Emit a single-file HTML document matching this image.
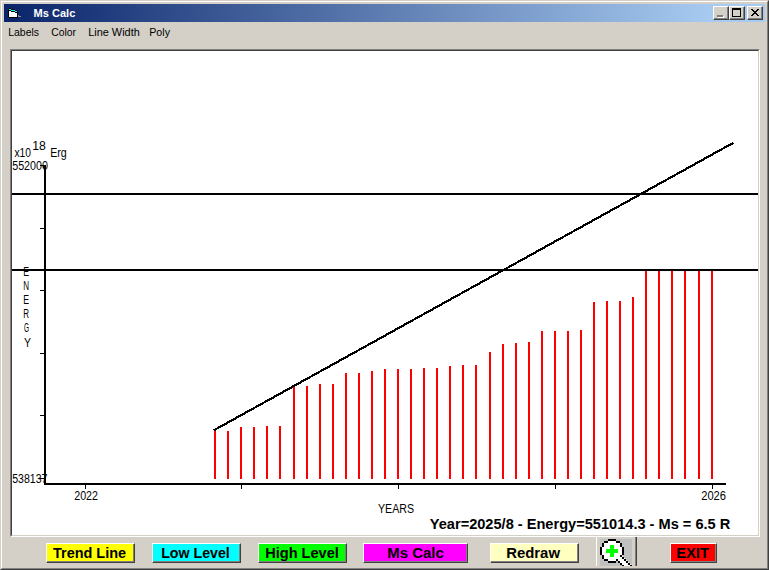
<!DOCTYPE html>
<html><head><meta charset="utf-8"><style>
html,body{margin:0;padding:0;}
body{width:769px;height:570px;position:relative;overflow:hidden;background:#d4d0c8;font-family:"Liberation Sans",sans-serif;}
.a{position:absolute;}
.btn{position:absolute;top:543px;height:20px;box-sizing:border-box;border-top:1px solid #fff;border-left:1px solid #fff;border-right:1px solid #404040;border-bottom:1px solid #404040;box-shadow:inset -1px -1px 0 #808080;}
.tb{position:absolute;top:6px;width:16px;height:14px;box-sizing:border-box;background:#d4d0c8;border-top:1px solid #fff;border-left:1px solid #fff;border-right:1px solid #404040;border-bottom:1px solid #404040;box-shadow:inset -1px -1px 0 #808080;}
svg{position:absolute;left:0;top:0;}
</style></head><body>
<div class="a" style="left:0;top:0;width:769px;height:570px;box-sizing:border-box;border-top:1px solid #d4d0c8;border-left:1px solid #d4d0c8;border-right:1px solid #404040;border-bottom:1px solid #404040;"></div>
<div class="a" style="left:1px;top:1px;width:767px;height:568px;box-sizing:border-box;border-top:1px solid #fff;border-left:1px solid #fff;border-right:1px solid #808080;border-bottom:1px solid #808080;"></div>
<div class="a" style="left:4px;top:4px;width:761px;height:18px;background:linear-gradient(to right,#0a246a 0px,#a6caf0 706px);"></div>
<svg width="30" height="22" shape-rendering="crispEdges">
  <g fill="#000"><rect x="8" y="9" width="1" height="8"/><rect x="9" y="8" width="2" height="1"/><rect x="11" y="9" width="4" height="1"/><rect x="15" y="10" width="2" height="1"/><rect x="17" y="11" width="1" height="7"/><rect x="9" y="17" width="8" height="1"/>
  <rect x="9" y="10" width="2" height="1"/><rect x="11" y="11" width="4" height="1"/><rect x="15" y="12" width="2" height="1"/></g>
  <g fill="#0ff"><rect x="9" y="9" width="2" height="1"/><rect x="11" y="10" width="4" height="1"/><rect x="15" y="11" width="2" height="1"/></g>
  <g fill="#fff"><rect x="9" y="11" width="2" height="6"/><rect x="11" y="12" width="4" height="5"/><rect x="15" y="13" width="2" height="4"/></g>
  <g fill="#8890b0"><rect x="18" y="15" width="1" height="2"/><rect x="19" y="16" width="2" height="1"/></g>
</svg>
<div class="tb" style="left:713px;"><div class="a" style="left:3px;top:8px;width:6px;height:2px;background:#808080;box-shadow:1px 1px 0 #fff;"></div></div>
<div class="tb" style="left:729px;"><div class="a" style="left:2px;top:1px;width:9px;height:9px;box-sizing:border-box;border:1px solid #000;border-top-width:2px;"></div></div>
<div class="tb" style="left:747px;"><svg width="14" height="12" shape-rendering="crispEdges" fill="#000"><rect x="3" y="2" width="1" height="1"/><rect x="4" y="2" width="1" height="1"/><rect x="9" y="2" width="1" height="1"/><rect x="10" y="2" width="1" height="1"/><rect x="4" y="3" width="1" height="1"/><rect x="5" y="3" width="1" height="1"/><rect x="8" y="3" width="1" height="1"/><rect x="9" y="3" width="1" height="1"/><rect x="5" y="4" width="1" height="1"/><rect x="6" y="4" width="1" height="1"/><rect x="7" y="4" width="1" height="1"/><rect x="8" y="4" width="1" height="1"/><rect x="6" y="5" width="1" height="1"/><rect x="7" y="5" width="1" height="1"/><rect x="5" y="6" width="1" height="1"/><rect x="6" y="6" width="1" height="1"/><rect x="7" y="6" width="1" height="1"/><rect x="8" y="6" width="1" height="1"/><rect x="4" y="7" width="1" height="1"/><rect x="5" y="7" width="1" height="1"/><rect x="8" y="7" width="1" height="1"/><rect x="9" y="7" width="1" height="1"/><rect x="3" y="8" width="1" height="1"/><rect x="4" y="8" width="1" height="1"/><rect x="9" y="8" width="1" height="1"/><rect x="10" y="8" width="1" height="1"/></svg></div>
<div class="a" style="left:10px;top:49px;width:750px;height:488px;box-sizing:border-box;border-top:1px solid #808080;border-left:1px solid #808080;border-right:1px solid #fff;border-bottom:1px solid #fff;"></div>
<div class="a" style="left:11px;top:50px;width:748px;height:486px;box-sizing:border-box;border-top:1px solid #404040;border-left:1px solid #404040;border-right:1px solid #d4d0c8;border-bottom:1px solid #d4d0c8;background:#fff;"></div>
<div class="btn" style="left:46px;width:89px;background:#ffff00;"></div>
<div class="btn" style="left:152px;width:89px;background:#00ffff;"></div>
<div class="btn" style="left:258px;width:89px;background:#00ff00;"></div>
<div class="btn" style="left:363px;width:105px;background:#ff00ff;"></div>
<div class="btn" style="left:490px;width:89px;background:#ffffc0;"></div>
<div class="btn" style="left:670px;width:47px;background:#ff0000;"></div>
<div class="a" style="left:596px;top:536px;width:1px;height:30px;background:#fff;"></div><div class="a" style="left:635px;top:537px;width:1px;height:29px;background:#808080;"></div><div class="a" style="left:636px;top:537px;width:1px;height:29px;background:#404040;"></div>
<svg style="left:596px;top:536px" width="41" height="32" shape-rendering="crispEdges">
  <rect x="4" y="3" width="32" height="27" fill="#c0c0c0"/>
  <g fill="#fff"><rect x="12" y="5" width="8" height="20"/><rect x="8" y="7" width="16" height="16"/><rect x="6" y="11" width="20" height="8"/><polygon points="20,23 26,19 36,30 27,30"/></g>
  <g fill="#000">
  <rect x="12" y="3" width="8" height="2"/><rect x="8" y="5" width="4" height="2"/><rect x="20" y="5" width="4" height="2"/>
  <rect x="6" y="7" width="2" height="4"/><rect x="24" y="7" width="2" height="4"/>
  <rect x="4" y="11" width="2" height="8"/><rect x="26" y="11" width="2" height="8"/>
  <rect x="6" y="19" width="2" height="4"/><rect x="24" y="19" width="2" height="2"/>
  <rect x="8" y="23" width="4" height="2"/><rect x="20" y="23" width="2" height="2"/>
  <rect x="12" y="25" width="8" height="2"/>
  <rect x="22" y="25" width="2" height="2"/><rect x="24" y="27" width="2" height="2"/><rect x="26" y="29" width="2" height="1"/>
  <rect x="26" y="21" width="2" height="2"/><rect x="28" y="23" width="2" height="2"/><rect x="30" y="25" width="2" height="2"/><rect x="32" y="27" width="2" height="2"/><rect x="34" y="29" width="2" height="1"/>
  </g>
  <g fill="#0f0"><rect x="10" y="13" width="12" height="4"/><rect x="14" y="9" width="4" height="12"/></g>
</svg>
<svg width="769" height="570" font-family="Liberation Sans, sans-serif">
 <g fill="#f00" shape-rendering="crispEdges">
<rect x="214" y="431" width="2" height="48"/>
<rect x="227" y="431" width="2" height="48"/>
<rect x="240" y="427" width="2" height="52"/>
<rect x="253" y="427" width="2" height="52"/>
<rect x="266" y="426" width="2" height="53"/>
<rect x="279" y="426" width="2" height="53"/>
<rect x="293" y="387" width="2" height="92"/>
<rect x="306" y="386" width="2" height="93"/>
<rect x="319" y="384" width="2" height="95"/>
<rect x="332" y="384" width="2" height="95"/>
<rect x="345" y="373" width="2" height="106"/>
<rect x="358" y="373" width="2" height="106"/>
<rect x="371" y="371" width="2" height="108"/>
<rect x="384" y="369" width="2" height="110"/>
<rect x="397" y="369" width="2" height="110"/>
<rect x="410" y="369" width="2" height="110"/>
<rect x="423" y="368" width="2" height="111"/>
<rect x="436" y="368" width="2" height="111"/>
<rect x="449" y="366" width="2" height="113"/>
<rect x="462" y="365" width="2" height="114"/>
<rect x="475" y="365" width="2" height="114"/>
<rect x="489" y="352" width="2" height="127"/>
<rect x="502" y="344" width="2" height="135"/>
<rect x="515" y="343" width="2" height="136"/>
<rect x="528" y="342" width="2" height="137"/>
<rect x="541" y="331" width="2" height="148"/>
<rect x="554" y="331" width="2" height="148"/>
<rect x="567" y="331" width="2" height="148"/>
<rect x="580" y="330" width="2" height="149"/>
<rect x="593" y="302" width="2" height="177"/>
<rect x="606" y="301" width="2" height="178"/>
<rect x="619" y="301" width="2" height="178"/>
<rect x="632" y="297" width="2" height="182"/>
<rect x="645" y="271" width="2" height="208"/>
<rect x="658" y="271" width="2" height="208"/>
<rect x="671" y="271" width="2" height="208"/>
<rect x="684" y="271" width="2" height="208"/>
<rect x="698" y="271" width="2" height="208"/>
<rect x="711" y="271" width="2" height="208"/>
 </g>
 <g fill="#000" shape-rendering="crispEdges">
  <rect x="12" y="193" width="746" height="2"/>
  <rect x="12" y="269" width="746" height="2"/>
  <rect x="44" y="165" width="2" height="320"/><rect x="43" y="165" width="1" height="3"/>
  <rect x="44" y="483" width="682" height="2"/>
  <rect x="40" y="165" width="4" height="1"/><rect x="40" y="228" width="4" height="1"/><rect x="40" y="290" width="4" height="1"/><rect x="40" y="353" width="4" height="1"/><rect x="40" y="415" width="4" height="1"/><rect x="40" y="478" width="4" height="1"/>
  <rect x="85" y="485" width="1" height="4"/><rect x="241" y="485" width="1" height="4"/><rect x="398" y="485" width="1" height="4"/><rect x="555" y="485" width="1" height="4"/><rect x="712" y="485" width="1" height="4"/>
 </g>
 <line x1="213.8" y1="430.3" x2="733.5" y2="142.7" stroke="#000" stroke-width="2.2" shape-rendering="crispEdges"/>
<text x="33.50" y="16.50" font-size="11" font-weight="bold" fill="#fff" textLength="41.80" lengthAdjust="spacingAndGlyphs">Ms Calc</text>
<text x="8.20" y="35.80" font-size="11.5" font-weight="normal" fill="#000" textLength="30.80" lengthAdjust="spacingAndGlyphs">Labels</text>
<text x="51.20" y="35.80" font-size="11.5" font-weight="normal" fill="#000" textLength="24.80" lengthAdjust="spacingAndGlyphs">Color</text>
<text x="88.20" y="35.80" font-size="11.5" font-weight="normal" fill="#000" textLength="51.60" lengthAdjust="spacingAndGlyphs">Line Width</text>
<text x="149.20" y="35.80" font-size="11.5" font-weight="normal" fill="#000" textLength="20.80" lengthAdjust="spacingAndGlyphs">Poly</text>
<text x="53.00" y="558.10" font-size="14" font-weight="bold" fill="#000" textLength="73.00" lengthAdjust="spacingAndGlyphs">Trend Line</text>
<text x="161.20" y="558.10" font-size="14" font-weight="bold" fill="#000" textLength="68.60" lengthAdjust="spacingAndGlyphs">Low Level</text>
<text x="265.20" y="558.10" font-size="14" font-weight="bold" fill="#000" textLength="73.60" lengthAdjust="spacingAndGlyphs">High Level</text>
<text x="387.20" y="558.10" font-size="14" font-weight="bold" fill="#000" textLength="56.60" lengthAdjust="spacingAndGlyphs">Ms Calc</text>
<text x="506.20" y="558.10" font-size="14" font-weight="bold" fill="#000" textLength="53.80" lengthAdjust="spacingAndGlyphs">Redraw</text>
<text x="676.20" y="557.50" font-size="14" font-weight="bold" fill="#000" textLength="32.80" lengthAdjust="spacingAndGlyphs">EXIT</text>
<text x="429.80" y="529.20" font-size="14" font-weight="bold" fill="#000" textLength="300.50" lengthAdjust="spacingAndGlyphs">Year=2025/8 - Energy=551014.3 - Ms = 6.5 R</text>
<text x="14.50" y="157.10" font-size="12" font-weight="normal" fill="#000" textLength="16.50" lengthAdjust="spacingAndGlyphs">x10</text>
<text x="32.20" y="149.50" font-size="12" font-weight="normal" fill="#000" textLength="13.60" lengthAdjust="spacingAndGlyphs">18</text>
<text x="50.20" y="157.10" font-size="12" font-weight="normal" fill="#000" textLength="16.60" lengthAdjust="spacingAndGlyphs">Erg</text>
<text x="12.20" y="169.50" font-size="12" font-weight="normal" fill="#000" textLength="35.80" lengthAdjust="spacingAndGlyphs">552000</text>
<text x="12.20" y="482.50" font-size="12" font-weight="normal" fill="#000" textLength="35.20" lengthAdjust="spacingAndGlyphs">538137</text>
<text x="74.20" y="499.50" font-size="12" font-weight="normal" fill="#000" textLength="23.80" lengthAdjust="spacingAndGlyphs">2022</text>
<text x="701.20" y="499.50" font-size="12" font-weight="normal" fill="#000" textLength="24.80" lengthAdjust="spacingAndGlyphs">2026</text>
<text x="378.00" y="512.50" font-size="12" font-weight="normal" fill="#000" textLength="36.00" lengthAdjust="spacingAndGlyphs">YEARS</text>
<text x="23.20" y="275.50" font-size="12" font-weight="normal" fill="#000" textLength="5.80" lengthAdjust="spacingAndGlyphs">E</text>
<text x="23.20" y="289.50" font-size="12" font-weight="normal" fill="#000" textLength="5.80" lengthAdjust="spacingAndGlyphs">N</text>
<text x="23.20" y="303.50" font-size="12" font-weight="normal" fill="#000" textLength="5.80" lengthAdjust="spacingAndGlyphs">E</text>
<text x="23.20" y="317.50" font-size="12" font-weight="normal" fill="#000" textLength="5.80" lengthAdjust="spacingAndGlyphs">R</text>
<text x="24.00" y="331.50" font-size="12" font-weight="normal" fill="#000" textLength="5.00" lengthAdjust="spacingAndGlyphs">G</text>
<text x="24.00" y="347.10" font-size="12" font-weight="normal" fill="#000" textLength="7.00" lengthAdjust="spacingAndGlyphs">Y</text>
</svg>
</body></html>
